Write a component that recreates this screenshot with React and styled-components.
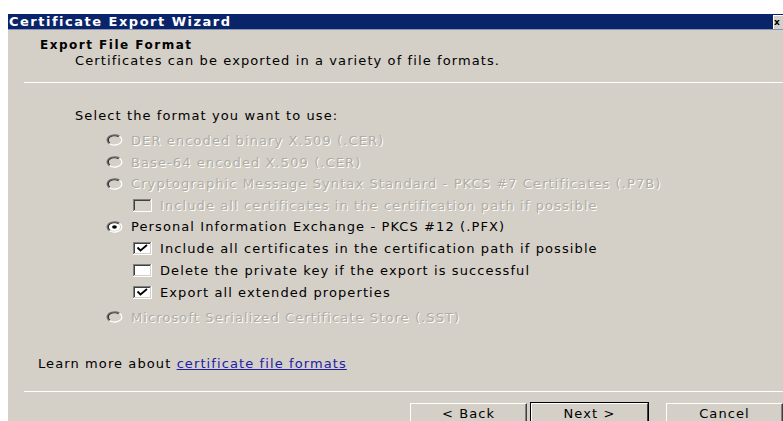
import React from "react";
import styled, { createGlobalStyle } from "styled-components";

const GlobalStyle = createGlobalStyle`
  html, body {
    margin: 0;
    padding: 0;
    background: #ffffff;
    overflow: hidden;
  }
  body {
    font-family: "DejaVu Sans", "Liberation Sans", sans-serif;
  }
`;

const Window = styled.div`
  margin: 14px 0 0 8px;
  width: 775px;
  height: 407px;
  background: #d4d0c8;
  display: flex;
  flex-direction: column;
  overflow: hidden;
  font-size: 13px;
  letter-spacing: 1.1px;
  color: #000;
`;

const TitleBar = styled.div`
  height: 15px;
  background: #0a246a;
  border-bottom: 1px solid #8a94b4;
  display: flex;
  align-items: center;
  justify-content: space-between;
  color: #fff;
  font-weight: bold;
  font-size: 13px;
  letter-spacing: 1.5px;
  padding-left: 1px;
`;

const TitleButton = styled.div`
  width: 9px;
  height: 13px;
  background: #d4d0c8;
  border-top: 1px solid #fff;
  border-left: 1px solid #fff;
  color: #000;
  font-size: 9px;
  letter-spacing: 0;
  line-height: 13px;
  overflow: hidden;
`;

const Header = styled.div`
  padding: 8px 0 0 32px;
  line-height: 15px;
`;

const Heading = styled.div`
  font-weight: bold;
  font-size: 12px;
  letter-spacing: 1.5px;
`;

const Subtitle = styled.div`
  padding-left: 35px;
`;

const Divider = styled.div`
  margin: ${(p) => p.$top}px 0 0 16px;
  height: 1px;
  background: #a09c94;
  border-bottom: 1px solid #ffffff;
`;

const Body = styled.div`
  padding: 25px 0 0 67px;
`;

const Prompt = styled.div`
  line-height: 15px;
  margin-bottom: 6px;
`;

const OptionRow = styled.label`
  display: flex;
  align-items: center;
  height: ${(p) => p.$h}px;
  padding-left: ${(p) => (p.$sub ? 58 : 31)}px;
  gap: 8px;
  color: ${(p) => (p.$disabled ? "#b0aca2" : "#000")};
  text-shadow: ${(p) => (p.$disabled ? "1px 1px 0 #ffffff" : "none")};
  white-space: nowrap;
`;

const LearnMore = styled.div`
  padding: 26px 0 0 30px;
  line-height: 15px;
`;

const Link = styled.a`
  color: #2020a8;
  text-decoration: underline;
`;

const Footer = styled.div`
  display: flex;
  justify-content: flex-end;
  padding-top: 11px;
`;

const Button = styled.button`
  box-sizing: border-box;
  width: 117px;
  height: 22px;
  margin-left: ${(p) => p.$gap}px;
  background: #d4d0c8;
  font-family: inherit;
  font-size: 13px;
  line-height: 18px;
  letter-spacing: 1.1px;
  color: #000;
  padding: 0;
  border: 1px solid;
  border-color: #ffffff #404040 #404040 #ffffff;
  box-shadow: ${(p) => (p.$default ? "0 0 0 1px #000" : "inset -1px -1px 0 #808080")};
`;

function Radio({ checked, disabled }) {
  return (
    <svg width="17" height="12" viewBox="0 0 17 12">
      <path d="M13.5 2.2 A7.5 5.2 0 0 0 1.2 6 A7.5 5.2 0 0 0 3.5 9.8" fill="none" stroke="#707070" strokeWidth="1.4" />
      <path d="M12.5 3 A6.3 4.2 0 0 0 2.3 6 A6.3 4.2 0 0 0 4 8.8" fill="none" stroke="#303030" strokeWidth="1.3" />
      <ellipse cx="8.5" cy="6" rx="5.6" ry="3.8" fill={disabled ? "#d4d0c8" : "#ffffff"} />
      <path d="M3.5 9.8 A7.5 5.2 0 0 0 15.8 6 A7.5 5.2 0 0 0 13.5 2.2" fill="none" stroke="#ffffff" strokeWidth="1.3" />
      {checked && <ellipse cx="8.5" cy="6" rx="2.4" ry="1.8" fill="#000" />}
    </svg>
  );
}

function Check({ checked, disabled }) {
  return (
    <svg width="19" height="13" viewBox="0 0 19 13">
      <rect x="0" y="0" width="19" height="13" fill="#ffffff" />
      <rect x="0" y="0" width="18" height="12" fill="#808080" />
      <rect x="1" y="1" width="17" height="11" fill="#d4d0c8" />
      <rect x="1" y="1" width="16" height="10" fill="#404040" />
      <rect x="2" y="2" width="15" height="9" fill={disabled ? "#d4d0c8" : "#ffffff"} />
      {checked && <path d="M4.5 5.5 L7.5 8.5 L14 3" fill="none" stroke="#000" strokeWidth="1.8" />}
    </svg>
  );
}

const options = [
  { kind: "radio", h: 22, label: "DER encoded binary X.509 (.CER)", disabled: true },
  { kind: "radio", h: 22, label: "Base-64 encoded X.509 (.CER)", disabled: true },
  {
    kind: "radio",
    h: 21,
    label: "Cryptographic Message Syntax Standard - PKCS #7 Certificates (.P7B)",
    disabled: true,
  },
  {
    kind: "check",
    h: 22,
    label: "Include all certificates in the certification path if possible",
    disabled: true,
  },
  { kind: "radio", h: 21, label: "Personal Information Exchange - PKCS #12 (.PFX)", checked: true },
  {
    kind: "check",
    h: 22,
    label: "Include all certificates in the certification path if possible",
    checked: true,
  },
  { kind: "check", h: 22, label: "Delete the private key if the export is successful" },
  { kind: "check", h: 23, label: "Export all extended properties", checked: true },
  { kind: "radio", h: 26, label: "Microsoft Serialized Certificate Store (.SST)", disabled: true },
];

export default function App() {
  return (
    <>
      <GlobalStyle />
      <Window>
        <TitleBar>
          <span>Certificate Export Wizard</span>
          <TitleButton>x</TitleButton>
        </TitleBar>
        <Header>
          <Heading>Export File Format</Heading>
          <Subtitle>Certificates can be exported in a variety of file formats.</Subtitle>
        </Header>
        <Divider $top={14} />
        <Body>
          <Prompt>Select the format you want to use:</Prompt>
          {options.map((o, i) => (
            <OptionRow key={i} $h={o.h} $sub={o.kind === "check"} $disabled={o.disabled}>
              {o.kind === "radio" ? (
                <Radio checked={o.checked} disabled={o.disabled} />
              ) : (
                <Check checked={o.checked} disabled={o.disabled} />
              )}
              <span>{o.label}</span>
            </OptionRow>
          ))}
        </Body>
        <LearnMore>
          Learn more about <Link href="#">certificate file formats</Link>
        </LearnMore>
        <Divider $top={20} />
        <Footer>
          <Button $gap={0}>&lt; Back</Button>
          <Button $gap={4} $default>
            Next &gt;
          </Button>
          <Button $gap={18}>Cancel</Button>
        </Footer>
      </Window>
    </>
  );
}
